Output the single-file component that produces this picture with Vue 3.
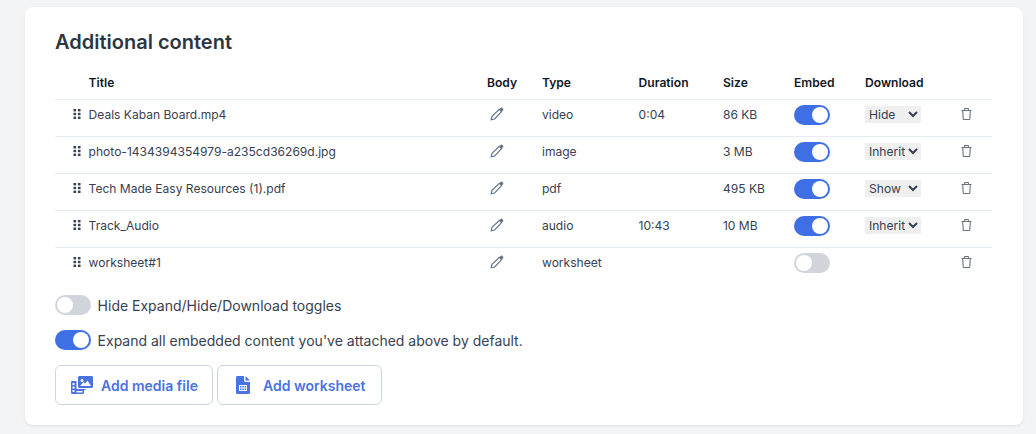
<script setup>
const rows = [
  { title: 'Deals Kaban Board.mp4', type: 'video', duration: '0:04', size: '86 KB', embed: true, download: 'Hide' },
  { title: 'photo-1434394354979-a235cd36269d.jpg', type: 'image', duration: '', size: '3 MB', embed: true, download: 'Inherit' },
  { title: 'Tech Made Easy Resources (1).pdf', type: 'pdf', duration: '', size: '495 KB', embed: true, download: 'Show' },
  { title: 'Track_Audio', type: 'audio', duration: '10:43', size: '10 MB', embed: true, download: 'Inherit' },
  { title: 'worksheet#1', type: 'worksheet', duration: '', size: '', embed: false, download: '' },
]
const options = ['Hide', 'Inherit', 'Show']
</script>

<template>
  <div class="page">
    <section class="card">
      <h2 class="heading">Additional content</h2>
      <div class="table">
        <div class="row head">
          <span></span>
          <span>Title</span>
          <span>Body</span>
          <span>Type</span>
          <span>Duration</span>
          <span>Size</span>
          <span>Embed</span>
          <span>Download</span>
          <span></span>
        </div>
        <div v-for="row in rows" :key="row.title" class="row body">
          <svg class="grip" viewBox="0 0 8 10" width="8" height="10" aria-hidden="true">
            <rect x="0.5" y="0" width="2.6" height="2.4" /><rect x="4.9" y="0" width="2.6" height="2.4" />
            <rect x="0.5" y="3.8" width="2.6" height="2.4" /><rect x="4.9" y="3.8" width="2.6" height="2.4" />
            <rect x="0.5" y="7.6" width="2.6" height="2.4" /><rect x="4.9" y="7.6" width="2.6" height="2.4" />
          </svg>
          <span>{{ row.title }}</span>
          <svg class="pencil" viewBox="0 0 14 14" width="14" height="14" aria-hidden="true">
            <path class="pencil-tip" d="M9.2 2.300 11 .8c.4-.3.9-.3 1.300.1l.8.8c.4.4.4.9.1 1.300L11.700 4.800z" />
            <path class="pencil-line" d="M9.400 2.400 11.600 4.600 4.600 12 1.200 12.800 2 9.400z" />
          </svg>
          <span>{{ row.type }}</span>
          <span>{{ row.duration }}</span>
          <span>{{ row.size }}</span>
          <span class="toggle" :class="{ on: row.embed }"><i></i></span>
          <span class="select-cell">
            <select v-if="row.download" class="select" :value="row.download">
              <option v-for="o in options" :key="o">{{ o }}</option>
            </select>
          </span>
          <svg class="trash" viewBox="0 0 11 12" width="11" height="12" aria-hidden="true">
            <path d="M.5 2.500h10M1.700 2.500l.5 8.300c0 .4.300.7.700.7h5.200c.4 0 .7-.3.700-.7l.5-8.300M3.600 2.500V1c0-.3.2-.5.5-.5h2.800c.3 0 .5.2.5.5v1.500" />
          </svg>
        </div>
      </div>

      <div class="option first">
        <span class="toggle"><i></i></span>
        <span>Hide Expand/Hide/Download toggles</span>
      </div>
      <div class="option">
        <span class="toggle on"><i></i></span>
        <span>Expand all embedded content you've attached above by default.</span>
      </div>

      <div class="actions">
        <button class="btn media" type="button">
          <svg viewBox="0 0 22 18" width="22" height="18" aria-hidden="true">
            <path fill-rule="evenodd" d="M7 1.500C7 .7 7.700 0 8.500 0h12C21.300 0 22 .7 22 1.500v9c0 .8-.7 1.500-1.500 1.500H8.500C7.700 12 7 11.300 7 10.500zM11 3a1.500 1.500 0 1 0 0 3 1.500 1.500 0 0 0 0-3zM9 10h11l-3.500-5.500-2.500 3-1.500-1.500z" />
            <path fill-rule="evenodd" d="M1.200 5H5.500v8h9v1H13v2.800c0 .7-.5 1.200-1.200 1.200H1.200C.5 18 0 17.500 0 16.800V6.200C0 5.500.5 5 1.200 5zM1.500 7v2h2V7zm0 3.500v2h2v-2zm0 3.500v2h2v-2zM5.500 15v1.500h6V15z" />
          </svg>
          <span>Add media file</span>
        </button>
        <button class="btn sheet" type="button">
          <svg viewBox="0 0 14 18" width="14" height="18" aria-hidden="true">
            <path fill-rule="evenodd" d="M1.500 0H8v4.500c0 .8.700 1.500 1.500 1.500H14v10.500c0 .8-.7 1.500-1.500 1.500h-11C.7 18 0 17.300 0 16.500v-15C0 .7.700 0 1.500 0zM3 9v6h8V9zm1 1h1.500v1.500H4zm2.300 0h1.500v1.500H6.300zm2.300 0H10v1.500H8.600zM4 12.500h1.500V14H4zm2.300 0h1.500V14H6.300zm2.300 0H10V14H8.600z" />
            <path d="M9.500 0 14 4.500H9.500z" />
          </svg>
          <span>Add worksheet</span>
        </button>
      </div>
    </section>
  </div>
</template>

<style scoped>
.page {
  box-sizing: border-box;
  width: 1036px;
  height: 434px;
  overflow: hidden;
  padding: 7px 13px 9px 25px;
  background: #f3f4f6;
  font-family: Inter, "Liberation Sans", sans-serif;
  color: #374151;
}
.card {
  box-sizing: border-box;
  height: 418px;
  padding: 21px 31px 0 30px;
  background: #fff;
  border-radius: 8px;
  box-shadow: 0 1px 3px rgba(0, 0, 0, 0.08);
}
.heading {
  margin: 0 0 12px;
  font-size: 20px;
  line-height: 28px;
  font-weight: 600;
  color: #2d3640;
}
.row {
  display: grid;
  grid-template-columns: 33.600px 398.400px 55px 96.600px 84.400px 71px 71px 95px 32px;
  align-items: center;
  font-size: 12.050px;
}
.head {
  height: 31px;
  padding-bottom: 2px;
  box-sizing: border-box;
  font-size: 12.100px;
  font-weight: 600;
  color: #111827;
}
.body {
  box-sizing: border-box;
  height: 37px;
  padding-bottom: 8px;
  border-top: 1px solid #e5eaf1;
}
.grip {
  fill: #374151;
  justify-self: end;
  margin-right: 7.600px;
}
.pencil {
  margin-left: 3.400px;
}
.pencil-tip {
  fill: #64748b;
}
.pencil-line {
  fill: none;
  stroke: #64748b;
  stroke-width: 1.200;
}
.trash {
  fill: none;
  stroke: #6b7280;
  stroke-width: 1.100;
  margin-left: 1px;
}
.toggle {
  position: relative;
  display: block;
  flex: none;
  box-sizing: border-box;
  width: 36px;
  height: 20px;
  border-radius: 10px;
  background: #d1d5db;
}
.toggle i {
  position: absolute;
  top: 2px;
  left: 2px;
  width: 16px;
  height: 16px;
  border-radius: 50%;
  background: #fff;
}
.toggle.on {
  background: #3f6fe4;
}
.toggle.on i {
  left: 18px;
}
.body .toggle {
  margin-top: 2px;
}
.select-cell {
  display: block;
}
.select {
  display: block;
  width: 56px;
  height: 17px;
  padding: 0;
  border: 0;
  border-radius: 0;
  background: #efefef;
  font-family: Inter, "Liberation Sans", sans-serif;
  font-size: 12.100px;
  color: #374151;
}
.option {
  display: flex;
  align-items: center;
  gap: 6.600px;
  height: 20px;
  margin-top: 15px;
  font-size: 14px;
  color: #374151;
}
.option.first {
  margin-top: 11px;
}
.actions {
  display: flex;
  gap: 4px;
  margin-top: 15px;
}
.btn {
  display: flex;
  align-items: center;
  box-sizing: border-box;
  height: 40px;
  padding: 0 15px;
  background: #fff;
  border: 1px solid #cbd5e1;
  border-radius: 6px;
  font-family: Inter, "Liberation Sans", sans-serif;
  font-size: 14px;
  font-weight: 600;
  color: #4a72e0;
  white-space: nowrap;
}
.btn svg {
  flex: none;
  fill: #4a72e0;
}
.media {
  width: 158px;
  gap: 8px;
}
.sheet {
  width: 165px;
  padding-left: 18px;
  gap: 13px;
}
</style>
